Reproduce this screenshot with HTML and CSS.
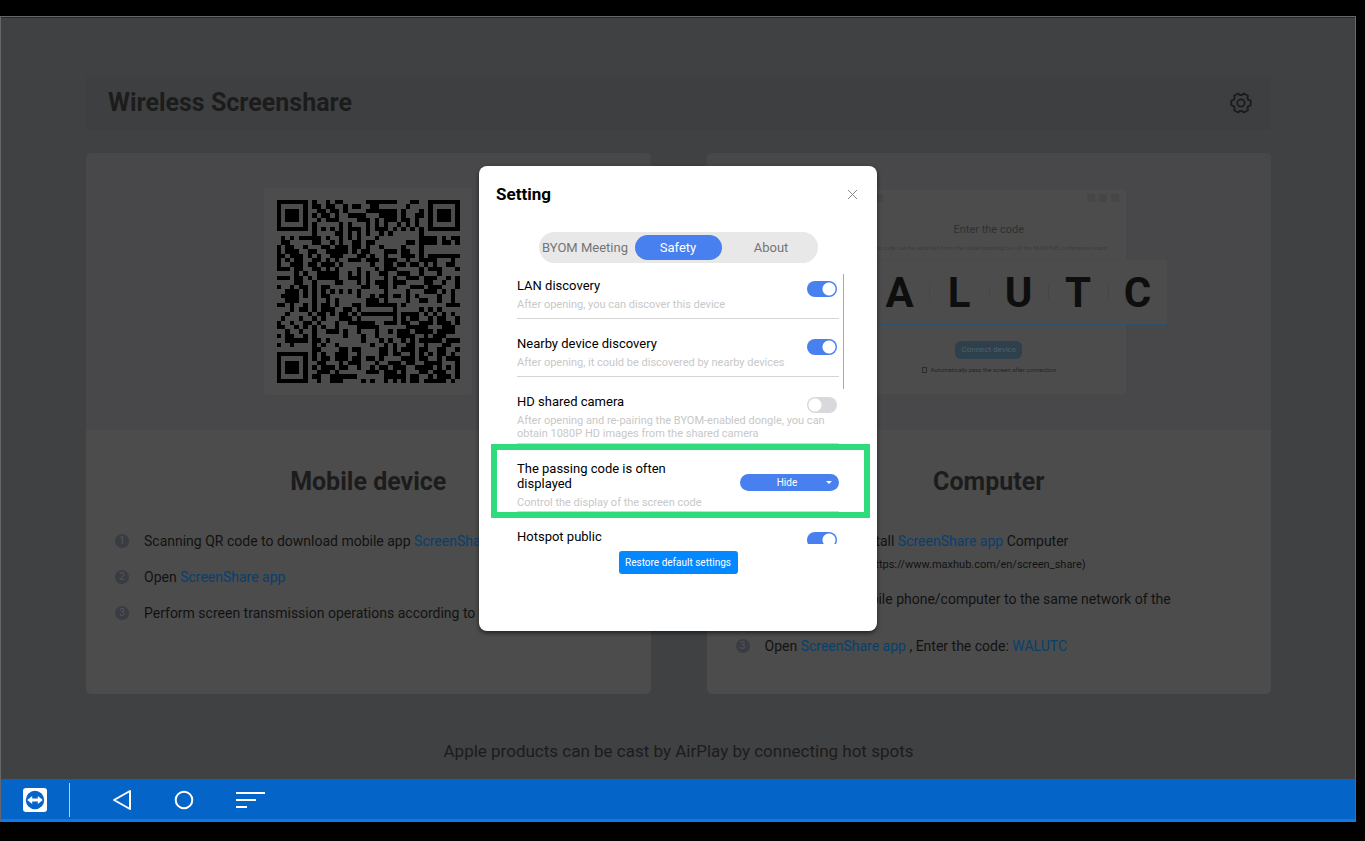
FILE: index.html
```html
<!DOCTYPE html>
<html lang="en">
<head>
<meta charset="utf-8">
<title>Wireless Screenshare</title>
<link rel="stylesheet" href="styles.css">
</head>
<body>
<div class="screen">
  <main class="desk">
    <header class="topbar">
      <h1>Wireless Screenshare</h1>
      <button class="gear" aria-label="Settings">
        <svg width="22" height="22" viewBox="0 0 24 24" fill="none" stroke="currentColor" stroke-width="2" stroke-linejoin="round"><path d="M22.6 9.4V14.6L20 15.3 18.9 17.4 19.6 19.9 15.2 22.4 13.2 20.7H10.8L8.8 22.4 4.4 19.9 5.1 17.4 4 15.3 1.4 14.6V9.4L4 8.7 5.1 6.6 4.4 4.1 8.8 1.6 10.8 3.3H13.2L15.2 1.6 19.6 4.1 18.9 6.6 20 8.7Z"/><circle cx="12" cy="12" r="4"/></svg>
      </button>
    </header>
    <div class="cards">
      <section class="card">
        <div class="visual">
          <div class="qr-box"><svg class="qr" viewBox="0 0 41 41" shape-rendering="crispEdges" role="img" aria-label="QR code"><path id="qr" fill="#000"/></svg></div>
        </div>
        <div class="info">
          <h2>Mobile device</h2>
          <ol class="steps">
            <li><span class="num">1</span><p>Scanning QR code to download mobile app <a href="#">ScreenShare app</a></p></li>
            <li><span class="num">2</span><p>Open <a href="#">ScreenShare app</a></p></li>
            <li><span class="num">3</span><p>Perform screen transmission operations according to the prompts</p></li>
          </ol>
        </div>
      </section>
      <section class="card">
        <div class="visual">
          <div class="mock">
            <div class="mock-bar"><i class="logo"></i><i></i><i></i><i></i></div>
            <div class="mock-title">Enter the code</div>
            <div class="mock-note">The code can be obtained from the tablet/passing box of the MAXHUB conference board</div>
            <div class="code"><b>W</b><b>A</b><b>L</b><b>U</b><b>T</b><b>C</b></div>
            <button class="mock-connect">Connect device</button>
            <label class="mock-check"><input type="checkbox">Automatically pass the screen after connection</label>
          </div>
        </div>
        <div class="info">
          <h2>Computer</h2>
          <ol class="steps">
            <li><span class="num">1</span><div><p>Download and install <a href="#">ScreenShare app</a> Computer</p><p class="small">Download page link: (https://www.maxhub.com/en/screen_share)</p></div></li>
            <li class="two-line"><span class="num">2</span><p>Connect your mobile phone/computer to the same network of the<br>board</p></li>
            <li><span class="num">3</span><p>Open <a href="#">ScreenShare app</a> , Enter the code: <a href="#">WALUTC</a></p></li>
          </ol>
        </div>
      </section>
    </div>
    <p class="foot">Apple products can be cast by AirPlay by connecting hot spots</p>

    <div class="overlay">
      <div class="modal" role="dialog" aria-labelledby="dlg">
        <div class="modal-head">
          <h2 id="dlg">Setting</h2>
          <button class="close" aria-label="Close"><svg width="11" height="11" viewBox="0 0 11 11" stroke="currentColor"><path d="M1 1 10 10M10 1 1 10"/></svg></button>
        </div>
        <div class="tabs">
          <button>BYOM Meeting</button>
          <button class="on">Safety</button>
          <button>About</button>
        </div>
        <div class="list">
          <div class="row">
            <label for="lan">LAN discovery</label><input class="toggle" id="lan" type="checkbox" checked>
            <p>After opening, you can discover this device</p>
          </div>
          <div class="row">
            <label for="near">Nearby device discovery</label><input class="toggle" id="near" type="checkbox" checked>
            <p>After opening, it could be discovered by nearby devices</p>
          </div>
          <div class="row compact">
            <label for="hd">HD shared camera</label><input class="toggle" id="hd" type="checkbox">
            <p>After opening and re-pairing the BYOM-enabled dongle, you can obtain 1080P HD images from the shared camera</p>
          </div>
          <div class="row compact marked">
            <label for="code">The passing code is often displayed</label>
            <span class="pick"><select id="code"><option>Hide</option><option>Show</option></select></span>
            <p>Control the display of the screen code</p>
          </div>
          <div class="row">
            <label for="hot">Hotspot public</label><input class="toggle" id="hot" type="checkbox" checked>
          </div>
          <span class="thumb"></span>
        </div>
        <button class="restore">Restore default settings</button>
      </div>
    </div>
  </main>
  <nav class="navbar">
    <button aria-label="TeamViewer"><svg width="24" height="24" viewBox="0 0 24 24"><rect width="24" height="24" rx="3" fill="#fff"/><circle cx="12" cy="12" r="9.2" fill="#0464c8"/><path fill="#fff" d="M4.2 12 9.2 8v2.6h5.6V8l5 4-5 4v-2.6H9.2V16z"/></svg></button>
    <span class="divider"></span>
    <button aria-label="Back"><svg width="20" height="22" viewBox="0 0 20 22" fill="none" stroke="#fff" stroke-width="2" stroke-linejoin="round"><path d="M18 2v18L2 11z"/></svg></button>
    <button aria-label="Home"><svg width="20" height="20" viewBox="0 0 20 20" fill="none" stroke="#fff" stroke-width="2"><circle cx="10" cy="10" r="8.3"/></svg></button>
    <button aria-label="Recent"><svg width="30" height="18" viewBox="0 0 30 18" fill="#fff"><path d="M0 1h29v2H0zM0 8h20v2H0zM0 15h11v2H0z"/></svg></button>
  </nav>
</div>
<script src="qr.js"></script>
</body>
</html>
```

FILE: styles.css
```css
* { box-sizing: border-box; }
body { margin: 0; padding: 16px 9px 19px 0; background: #000; font-family: Roboto, "Liberation Sans", sans-serif; color: #121212; }
h1, h2, p, ol { margin: 0; padding: 0; }
button { border: 0; padding: 0; background: none; font: inherit; color: inherit; }
a { color: #06406f; text-decoration: none; }
svg { display: block; }

.screen { display: flex; flex-direction: column; min-height: calc(100vh - 35px); border: 1px solid #66676a; }
.desk { position: relative; flex: 1; padding: 57px 84px 0 85px; background: #404143; border-top: 1px solid #2e2924; }

.topbar { display: flex; align-items: center; justify-content: space-between; height: 55px; padding: 0 19px 0 22px; border-radius: 4px; background: #3e3f40; color: #1c1c1c; }
.topbar h1 { font-size: 25px; line-height: 30px; font-weight: 700; }

.cards { display: grid; grid-template-columns: 1fr 1fr; gap: 56px; margin-top: 23px; }
.card { overflow: hidden; border-radius: 5px; background: #4c4c4c; }
.visual { display: flex; justify-content: center; height: 277px; padding-top: 35px; background: #48484a; }
.qr-box { width: 208px; height: 207px; padding: 12px; border-radius: 4px; background: #4c4c4c; }
.qr { width: 184px; height: 183px; }

.mock { display: flex; flex-direction: column; align-items: center; width: 274px; height: 204px; margin-top: 2px; background: #4c4c4c; color: #303030; }
.mock-bar { display: flex; align-self: stretch; gap: 4px; padding: 4px 7px 0 8px; }
.mock-bar i { width: 8px; height: 8px; background: #464646; }
.mock-bar .logo { width: 23px; margin-right: auto; }
.mock-title { margin-top: 20px; font-size: 11px; line-height: 16px; }
.mock-note { margin-top: 6px; font-size: 6px; line-height: 8px; color: #3c3c3c; white-space: nowrap; }
.code { display: grid; grid-template-columns: repeat(6, 1fr); flex: none; align-items: center; width: 359px; height: 66px; margin-top: 7px; border: 1px solid #2c5170; border-radius: 2px; background: #4c4c4c; color: #0e0e0e; font-size: 42px; text-align: center; }
.code b + b { background: linear-gradient(#464646, #464646) 0 50% / 1px 14px no-repeat; }
.mock-connect { width: 67px; height: 18px; margin-top: 16px; border-radius: 6px; background: #2f404d; color: #4f5f6b; font-size: 8px; line-height: 18px; }
.mock-check { display: flex; align-items: center; gap: 4px; margin-top: 7px; font-size: 6px; line-height: 8px; color: #262626; white-space: nowrap; }
.mock-check input { appearance: none; width: 5px; height: 6px; margin: 0; border: 1px solid #2c2c2c; }

.info { padding: 37px 29px 38px; }
.info h2 { font-size: 25px; line-height: 30px; text-align: center; color: #1c1c1c; }
.steps { display: grid; gap: 16px; margin-top: 34px; list-style: none; font-size: 14px; line-height: 20px; white-space: nowrap; }
.steps li { display: flex; gap: 15px; }
.num { flex: none; width: 14px; height: 14px; margin-top: 3px; border-radius: 50%; background: #3a3c43; color: #53555b; font-size: 10px; line-height: 14px; text-align: center; }
.small { margin-top: 6px; font-size: 11px; line-height: 16px; }
.two-line { margin-bottom: -9px; }
.foot { padding: 47px 0 18px; font-size: 17px; line-height: 20px; text-align: center; color: #1c1c1c; }

.overlay { position: absolute; inset: 0; display: flex; align-items: center; justify-content: center; }
.modal { display: flex; flex-direction: column; width: 398px; padding-bottom: 57px; border-radius: 8px; background: #fff; color: #000; box-shadow: 0 2px 4px rgba(0, 0, 0, .55); }
.modal-head { display: flex; align-items: center; justify-content: space-between; padding: 17px 19px 0 17px; }
.modal-head h2 { font-size: 17px; line-height: 22px; }
.close { color: #888; }
.tabs { display: grid; grid-template-columns: repeat(3, 1fr); align-self: center; width: 279px; height: 31px; margin-top: 27px; padding: 3px 0; border-radius: 16px; background: #e8e8e8; }
.tabs button { font-size: 13px; line-height: 25px; color: #757575; white-space: nowrap; }
.tabs .on { margin: 0 3px; border-radius: 13px; background: #4880f0; color: #fff; }

.list { position: relative; height: 270px; margin-top: 11px; padding: 0 38px; overflow: hidden; }
.row { position: relative; display: grid; grid-template-columns: 1fr auto; padding: 17px 0 7px; border-bottom: 1px solid #d4d4d4; }
.row:first-child { padding-top: 4px; }
.row.compact { padding-bottom: 3px; }
.row.marked { padding-bottom: 2px; }
.row label { max-width: 180px; font-size: 13px; line-height: 15px; }
.row p { grid-column: 1 / -1; margin-top: 5px; font-size: 11px; line-height: 13px; color: #c8c8c8; }
.toggle { appearance: none; width: 30px; height: 16px; margin: 3px 2px -4px 0; border-radius: 8px; background: radial-gradient(circle at 8px 8px, #fff 6px, transparent 7px) #d8d8dd; }
.toggle:checked { background: radial-gradient(circle at 22px 8px, #fff 6px, transparent 7px) #4880f0; }
.pick { position: relative; align-self: start; height: 17px; margin: 13px 0 0; }
.pick select { display: block; appearance: none; width: 99px; height: 17px; padding: 0 5px 0 0; border: 0; border-radius: 9px; background: #4880f0; color: #fff; font: 10px/17px Roboto, sans-serif; text-align: center; text-align-last: center; }
.pick::after { content: ""; position: absolute; right: 7px; top: 7px; border: 3px solid transparent; border-top-color: #fff; border-bottom: 0; }
.marked::before { content: ""; position: absolute; z-index: 1; inset: 0 -31px -7px -26px; border: 6px solid #2edc7e; pointer-events: none; }
.thumb { position: absolute; top: 0; right: 33px; width: 1px; height: 115px; background: #aaa; }
.restore { align-self: center; width: 119px; height: 23px; margin-top: 7px; border-radius: 3px; background: #0488ff; color: #fff; font-size: 10px; line-height: 23px; }

.navbar { display: flex; align-items: center; height: 42px; padding: 1px 0 0 22px; background: #0464c8; border-bottom: 2px solid #1078e8; }
.divider { width: 1px; height: 34px; margin: 0 42px 0 22px; background: #b4d0f0; }
.navbar button + button { margin-left: 42px; }
```

FILE: qr.js
```javascript
// Dark module runs, one entry per row of the code.
const rows = [
  "0-6 8 11 13-14 20-26 30-31 34-40",
  "0 6 8-9 11-12 15 17-18 21-22 29 34 40",
  "0 2-4 6 9-10 12-13 15 20-26 28 32 34 36-38 40",
  "0 2-4 6 8 10-11 13 16-19 23-26 28 31-32 34 36-38 40",
  "0 2-4 6 9 11-13 18-20 22 24-26 28-29 31 34 36-38 40",
  "0 6 8 14 16 20 22 24 27 29 31 34 40",
  "0-6 8 10 12 14 16-18 20 22-24 26 28 30 32 34-40",
  "8 13-14 16 18 20 23 25 32",
  "1 3 5-9 11 14 16 18 22 32-35 37 39-40",
  "1-2 8-9 12 14 17-18 20-21 29-30 32-35 37-38 40",
  "0 2-3 6 10-11 13-15 17-18 20 23 28 32",
  "0 2-4 7-8 11-15 17 19-20 24-26 28-29 32",
  "0-1 3-5 7 9 12-14 18-19 21 24 28-30 32 34-40",
  "0 2 4-5 8-9 11 13 16-18 20-22 24-26 29 32-35 39",
  "0 3-5 7-8 10-12 14 21 24-25 27-28 30-31 33 35 38-39",
  "0-2 4-5 8-9 11 13 18 22 24-26 32 34-36 40",
  "4 6 9-13 16 18 20 23-24 27-29 32 36",
  "0-2 4-5 7 9-13 16-18 20 24 26 29-31 33-35 38 40",
  "4-5 8 13-14 18 20 22 23-24 26-28 33-34 37 40",
  "0 3 5-6 8 10-11 19-20 23-24 26 30-32 34-36 40",
  "2-4 6 8 10 12 14 16 18 24 29 33-35 37 39",
  "1-4 6 8 10-11 18 21 23-24 26-27 29 31 36 39",
  "2-4 8 11 13 20-22 24 29 32-33 36 39",
  "0-1 3 6 8 10-11 13 17-18 20-26 28 38-40",
  "3 5-6 8 10-12 15-16 18 26 32 34 36",
  "2 7 9-10 12 14-15 17 19-26 28-31 33 35 37 39",
  "1 5 8 10 14-16 18 26 28 30-31 34 36-37 40",
  "0 3 6-7 9 13 16-21 24-26 28-29 32-34 36-38 40",
  "0-1 4 6 8 10 13 18-22 29-33 37-39",
  "2 5 8 11-13 15 18 22 25 27-29 31-34 36-39",
  "0 2-3 6 8 15 19 22 27-30 33 35-37",
  "2-6 8-9 11 19 23 25 28 30 32-36 38-40",
  "0 3 8 10 13 21 24 26 29-30 33 37-38",
  "8-9 14-15 17-18 23-24 26 28-30 32-33 36-37 40",
  "0-6 8 10 13-15 18 23-24 26-27 30 32 34 36-37 39",
  "0 6 8 10-11 13-15 17-18 20-21 23 28-30 32-33 36 38-40",
  "0 2-4 6 9-10 14 16-18 22 25-27 29-30 33-36 40",
  "0 2-4 6 8 10-12 14-15 18 21 23-24 26-28 31-34 36 38 40",
  "0 2-4 6 9-11 13 20-22 24-26 28 32-33 35-37 40",
  "0 6 8-9 12-17 24-28 30-31 34 36-38 40",
  "0-6 9 12-14 19 21 24 26 28 30-31 33-37 39"
];
document.getElementById("qr").setAttribute("d", rows.map((row, y) =>
  row.split(" ").map(run => {
    const [a, b = a] = run.split("-").map(Number);
    return `M${a} ${y}h${b - a + 1}v1h${a - b - 1}z`;
  }).join("")).join(""));
```
